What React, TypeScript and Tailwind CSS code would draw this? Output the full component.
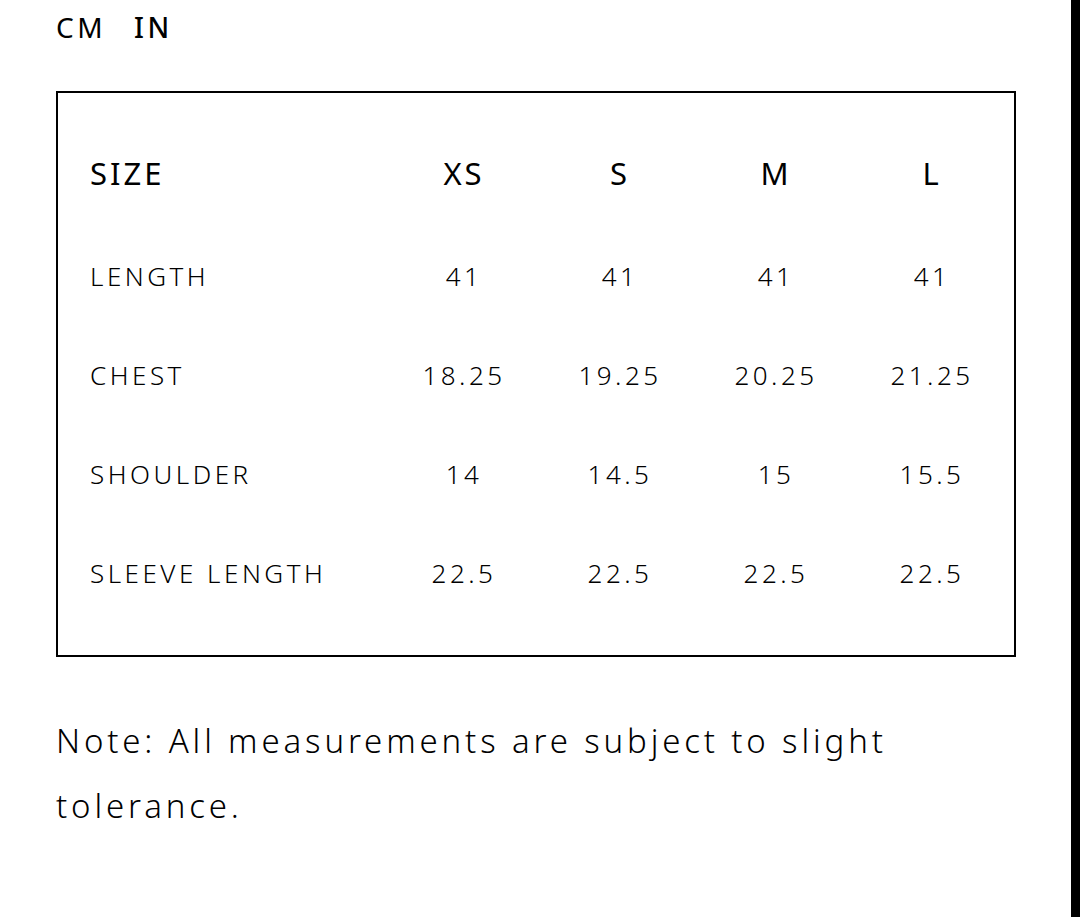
import React from "react";

const rows: [string, string[]][] = [
  ["LENGTH", ["41", "41", "41", "41"]],
  ["CHEST", ["18.25", "19.25", "20.25", "21.25"]],
  ["SHOULDER", ["14", "14.5", "15", "15.5"]],
  ["SLEEVE LENGTH", ["22.5", "22.5", "22.5", "22.5"]],
];

export default function App() {
  return (
    <div
      className="relative w-[1080px] h-[917px] bg-white text-black overflow-hidden"
      style={{ fontFamily: '"Noto Sans", "Liberation Sans", sans-serif' }}
    >
      <div className="absolute right-0 top-0 w-[9px] h-full bg-black" />
      <div className="pl-[56px] pr-[64px]">
        <div className="flex items-center gap-[28px] h-[54px] text-[28px] tracking-[3.5px] leading-none">
          <span className="font-normal">CM</span>
          <span className="font-medium">IN</span>
        </div>
        <div className="mt-[37px] w-[960px] h-[566px] border-2 border-black pl-[32px] pr-[4px] pt-[31px]">
          <div className="flex h-[103px] pb-[4px] items-center text-[31px] font-normal tracking-[3px]">
            <div className="w-[296px]">SIZE</div>
            {["XS", "S", "M", "L"].map((s) => (
              <div key={s} className="flex-1 text-center">{s}</div>
            ))}
          </div>
          {rows.map(([label, vals]) => (
            <div key={label} className="flex h-[99px] items-center text-[26px] font-light tracking-[3.5px]">
              <div className="w-[296px]">{label}</div>
              {vals.map((v, i) => (
                <div key={i} className="flex-1 text-center">{v}</div>
              ))}
            </div>
          ))}
        </div>
        <p className="mt-[51px] text-[33px] font-light leading-[65px] tracking-[3.85px] w-[920px]">
          Note: All measurements are subject to slight tolerance.
        </p>
      </div>
    </div>
  );
}
